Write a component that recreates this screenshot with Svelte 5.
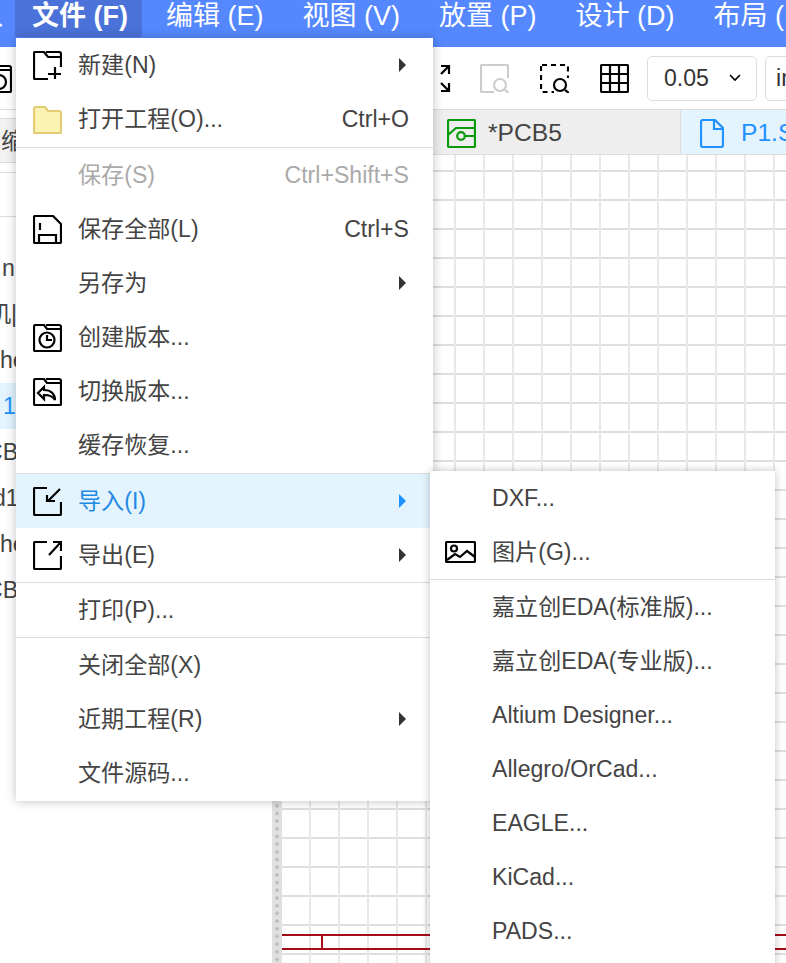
<script>
  const menus = [
    { label: '编辑 (E)' },
    { label: '视图 (V)' },
    { label: '放置 (P)' },
    { label: '设计 (D)' },
    { label: '布局 (L)' }
  ];
  const rows = [
    { t: 'n', off: 2 },
    { t: '机|', off: -12 },
    { t: 'he', off: 0 },
    { t: '1', off: 3, active: true },
    { t: 'CB', off: -14 },
    { t: 'd1', off: -7 },
    { t: 'he', off: 0 },
    { t: 'CB', off: -14 }
  ];
  const sub = ['嘉立创EDA(标准版)...', '嘉立创EDA(专业版)...', 'Altium Designer...', 'Allegro/OrCad...', 'EAGLE...', 'KiCad...', 'PADS...', 'Protel...'];
</script>

<div class="app">
  <header class="menubar">
    <span class="prev"><span>入</span></span>
    <span class="mi active">文件 (F)</span>
    {#each menus as m}<span class="mi">{m.label}</span>{/each}
  </header>

  <div class="toolbar">
    <svg class="tool clipped" viewBox="0 0 29 29"><path d="M1 4a2 2 0 0 1 1-2h9l3 4h13a1 1 0 0 1 1 1v20a1 1 0 0 1-1 1H2a1 1 0 0 1-1-1zM13 2h13a2 2 0 0 1 2 2v3" /><circle cx="16" cy="18" r="7" /></svg>
    <div class="toolspacer"></div>
    <svg class="tool fit" viewBox="0 0 29 29"><path d="M10 2h8v8M18 2l-8 8M18 19v8h-8M18 27l-8-8" /></svg>
    <svg class="tool dim" viewBox="0 0 29 29"><path d="M18 1h9a1 1 0 0 1 1 1v12M1 14V2a1 1 0 0 1 1-1h16M1 14v13a1 1 0 0 0 1 1h12" /><circle cx="20" cy="21" r="6" /><path d="M25 26l4 3" /></svg>
    <svg class="tool" viewBox="0 0 29 29"><path class="dash" d="M2 1h25a1 1 0 0 1 1 1v12M1 2v25a1 1 0 0 0 1 1h12" /><circle cx="20" cy="21" r="6" /><path d="M25 26l4 3" /></svg>
    <svg class="tool" viewBox="0 0 29 29"><rect x="1" y="1" width="27" height="27" rx="1" /><path d="M10 1v27M19 1v27M1 10h27M1 19h27" /></svg>
    <div class="select">
      <span>0.05</span>
      <svg class="chev" viewBox="0 0 12 8"><path d="M1 1l5 5 5-5" /></svg>
    </div>
    <div class="select second"><span>inch</span></div>
  </div>

  <div class="body">
    <aside class="side">
      <div class="side-gap"></div>
      <div class="side-tabs"><span class="side-tab">缩略图</span></div>
      <div class="side-line"></div>
      <div class="side-list">
        {#each rows as r}
          <div class="row" class:on={r.active}><span style="margin-left:{r.off}px">{r.t}</span></div>
        {/each}
      </div>
    </aside>
    <div class="ruler"></div>
    <main class="main">
      <div class="tabs">
        <div class="tab pcb">
          <svg class="tabicon" viewBox="0 0 29 29"><rect x="1" y="1" width="27" height="27" rx="1" /><path d="M1 16l8-7h19M18 17h10" /><circle cx="14" cy="17" r="3.8" /></svg>
          <span>*PCB5</span>
        </div>
        <div class="tab sch">
          <svg class="fileicon" viewBox="0 0 24 29"><path d="M3 1h12l8 8v17a2 2 0 0 1-2 2H3a2 2 0 0 1-2-2V3a2 2 0 0 1 2-2zM14 1v9h9" /></svg>
          <span>P1.Sch1</span>
        </div>
      </div>
      <div class="canvas">
        <div class="wire">
          <div class="tick"></div>
        </div>
      </div>
    </main>
  </div>

  <nav class="menu">
    <div class="item">
      <svg class="ico" viewBox="0 0 29 29"><path d="M15 28H2a1 1 0 0 1-1-1V2a1 1 0 0 1 1-1h9l4 5h12a1 1 0 0 1 1 1v9M13 1h13a2 2 0 0 1 2 2v3M15 23h13M22 16v12" /></svg>
      <span class="tx">新建(N)</span><i class="arrow"></i>
    </div>
    <div class="item">
      <svg class="ico" viewBox="0 0 29 29"><path class="yellow" d="M1 4a2 2 0 0 1 2-2h9l3 4h11a2 2 0 0 1 2 2v19a1 1 0 0 1-1 1H2a1 1 0 0 1-1-1z" /></svg>
      <span class="tx">打开工程(O)...</span><span class="key">Ctrl+O</span>
    </div>
    <div class="sep lead"></div>
    <div class="item off">
      <span class="tx">保存(S)</span><span class="key">Ctrl+Shift+S</span>
    </div>
    <div class="item">
      <svg class="ico" viewBox="0 0 29 29"><path d="M2 1h18l8 8v18a1 1 0 0 1-1 1H2a1 1 0 0 1-1-1V2a1 1 0 0 1 1-1zM7 8v7M6 28V20h17v8" /></svg>
      <span class="tx">保存全部(L)</span><span class="key">Ctrl+S</span>
    </div>
    <div class="item"><span class="tx">另存为</span><i class="arrow"></i></div>
    <div class="item">
      <svg class="ico" viewBox="0 0 29 29"><path d="M1 4a2 2 0 0 1 1-2h9l3 4h13a1 1 0 0 1 1 1v20a1 1 0 0 1-1 1H2a1 1 0 0 1-1-1zM13 2h13a2 2 0 0 1 2 2v3" /><circle cx="14" cy="17" r="7.5" /><path d="M14 12v5h5" /></svg>
      <span class="tx">创建版本...</span>
    </div>
    <div class="item">
      <svg class="ico" viewBox="0 0 29 29"><path d="M1 4a2 2 0 0 1 1-2h9l3 4h13a1 1 0 0 1 1 1v20a1 1 0 0 1-1 1H2a1 1 0 0 1-1-1zM13 2h13a2 2 0 0 1 2 2v3" /><path d="M11 10l-6 6 6 6v-4c5 0 9 1 11 5 0-6-4-10-11-10z" /></svg>
      <span class="tx">切换版本...</span>
    </div>
    <div class="item"><span class="tx">缓存恢复...</span></div>
    <div class="sep lead"></div>
    <div class="item hot">
      <svg class="ico" viewBox="0 0 29 29"><path d="M14 1H2a1 1 0 0 0-1 1v25a1 1 0 0 0 1 1h25a1 1 0 0 0 1-1V15M27 2L15 14M14 8v6h8" /></svg>
      <span class="tx">导入(I)</span><i class="arrow"></i>
    </div>
    <div class="item">
      <svg class="ico" viewBox="0 0 29 29"><path d="M14 1H2a1 1 0 0 0-1 1v25a1 1 0 0 0 1 1h25a1 1 0 0 0 1-1V15M16 14L28 1M20 1h8v9" /></svg>
      <span class="tx">导出(E)</span><i class="arrow"></i>
    </div>
    <div class="sep"></div>
    <div class="item"><span class="tx">打印(P)...</span></div>
    <div class="sep"></div>
    <div class="item"><span class="tx">关闭全部(X)</span></div>
    <div class="item"><span class="tx">近期工程(R)</span><i class="arrow"></i></div>
    <div class="item"><span class="tx">文件源码...</span></div>
  </nav>

  <nav class="submenu">
    <div class="subitem"><span>DXF...</span></div>
    <div class="subitem">
      <svg class="imgico" viewBox="0 0 31 22"><rect x="1" y="1" width="29" height="20" rx="1" /><circle cx="9" cy="7.5" r="3" /><path d="M2 19l8-6 5 3 7-6 8 6" /></svg>
      <span>图片(G)...</span>
    </div>
    <div class="sep"></div>
    {#each sub as s}<div class="subitem"><span>{s}</span></div>{/each}
  </nav>
</div>

<style>
  :global(body) {
    margin: 0;
    overflow: hidden;
  }
  .app {
    position: relative;
    width: 786px;
    height: 963px;
    overflow: hidden;
    display: flex;
    flex-direction: column;
    background: #fff;
    font-family: "Liberation Sans", "Noto Sans CJK SC", sans-serif;
    font-size: 23.1px;
    line-height: 30px;
    color: #444;
  }
  svg {
    fill: none;
    stroke: #000;
    stroke-width: 2.2;
    flex: none;
  }
  .menubar {
    height: 47px;
    flex: none;
    background: #5588ff;
    display: flex;
    align-items: flex-start;
    white-space: nowrap;
    color: #fff;
    font-size: 27px;
  }
  .prev {
    width: 15px;
    flex: none;
    display: flex;
    justify-content: flex-end;
    overflow: hidden;
    line-height: 33px;
  }
  .prev span {
    flex: none;
    margin-right: 12px;
  }
  .mi {
    height: 37px;
    line-height: 33px;
    padding: 0 17px;
    margin-right: 5px;
    box-sizing: border-box;
    flex: none;
  }
  .mi.active {
    padding-right: 14px;
    margin-right: 7px;
    background: #4a72d8;
    border-radius: 0 0 3px 3px;
    font-weight: 700;
  }
  .toolbar {
    height: 62px;
    flex: none;
    display: flex;
    align-items: center;
    gap: 31px;
    border-bottom: 1px solid #ddd;
    white-space: nowrap;
    overflow: hidden;
  }
  .tool {
    width: 29px;
    height: 29px;
    margin-top: 1px;
  }
  .clipped {
    margin-left: -17px;
  }
  .toolspacer {
    width: 357px;
    flex: none;
  }
  .fit {
    margin-right: -11px;
  }
  .tool.dim { stroke: #ccc; }
  .dash { stroke-dasharray: 5 4; }
  .select {
    flex: none;
    box-sizing: border-box;
    width: 110px;
    height: 45px;
    border: 1px solid #ddd;
    border-radius: 5px;
    margin-left: -13px;
    padding: 0 15px 0 16px;
    display: flex;
    align-items: center;
    justify-content: space-between;
    color: #333;
  }
  .select.second {
    margin-left: -23px;
    padding-left: 10px;
    width: 120px;
    justify-content: flex-start;
  }
  .chev {
    width: 12px;
    height: 8px;
    stroke-width: 1.6;
  }
  .body {
    flex: 1;
    min-height: 0;
    display: flex;
  }
  .side {
    width: 272px;
    flex: none;
    overflow: hidden;
    display: flex;
    flex-direction: column;
  }
  .side-gap { height: 8px; flex: none; }
  .side-tabs {
    height: 45px;
    flex: none;
    box-sizing: border-box;
    background: #f2f2f2;
    border-top: 1px solid #ddd;
    border-bottom: 1px solid #ddd;
    display: flex;
    align-items: center;
  }
  .side-tab { margin-left: 1px; }
  .side-line {
    height: 45px;
    flex: none;
    margin-top: 9px;
    box-sizing: border-box;
    border-top: 1px solid #ddd;
    border-bottom: 1px solid #ddd;
  }
  .side-list { margin-top: 28px; }
  .row {
    height: 46px;
    display: flex;
    align-items: center;
    white-space: nowrap;
    color: #444;
  }
  .row.on {
    background: #e3f4fe;
    color: #1e90ff;
  }
  .ruler {
    width: 10px;
    flex: none;
    background-color: #e0e0e0;
    background-image: radial-gradient(circle, #bbb 1.4px, transparent 2px);
    background-size: 10px 7.7px;
  }
  .main {
    flex: 1;
    min-width: 0;
    display: flex;
    flex-direction: column;
  }
  .tabs {
    height: 45px;
    flex: none;
    display: flex;
    box-sizing: border-box;
    border-bottom: 1px solid #ddd;
    white-space: nowrap;
  }
  .tab {
    display: flex;
    align-items: center;
    flex: none;
    padding-top: 2px;
  }
  .pcb {
    width: 399px;
    box-sizing: border-box;
    padding-left: 165px;
    gap: 12px;
    background: #eeeeee;
    border-right: 1px solid #ddd;
    color: #444;
    font-size: 24.6px;
  }
  .tabicon {
    width: 29px;
    height: 29px;
    stroke: #089a08;
  }
  .sch {
    flex: 1;
    padding-left: 19px;
    gap: 17px;
    background: #e3f4fe;
    color: #1e90ff;
    font-size: 24.6px;
  }
  .fileicon {
    width: 24px;
    height: 29px;
    stroke: #1e90ff;
  }
  .canvas {
    flex: 1;
    position: relative;
    background-color: #fff;
    background-image:
      linear-gradient(to right, #e8e8e8 2px, transparent 2px),
      linear-gradient(to bottom, #dedede 1.5px, transparent 1.5px);
    background-size: 29px 29px;
    background-position: 27px 15px;
  }
  .wire {
    position: absolute;
    left: 0;
    right: 0;
    top: 779px;
    height: 16px;
    box-sizing: border-box;
    border-top: 2px solid #a30d17;
    border-bottom: 2px solid #a30d17;
  }
  .tick {
    position: absolute;
    left: 39px;
    top: 0;
    width: 2px;
    height: 100%;
    background: #a30d17;
  }
  .menu {
    position: absolute;
    left: 16px;
    top: 38px;
    width: 417px;
    background: #fff;
    box-shadow: 0 0 10px rgba(0, 0, 0, 0.25);
    display: flex;
    flex-direction: column;
    padding-bottom: 1px;
    white-space: nowrap;
  }
  .item {
    height: 54px;
    flex: none;
    position: relative;
    display: flex;
    align-items: center;
    padding: 0 24px 0 62px;
  }
  .ico {
    position: absolute;
    left: 17px;
    top: 13px;
    width: 29px;
    height: 29px;
  }
  .yellow {
    fill: #fbf3b4;
    stroke: #e3cc72;
  }
  .tx { flex: 1; }
  .key { flex: none; }
  .off { color: #aaa; }
  .hot {
    background: #e3f4fe;
    color: #1e88e5;
  }
  .arrow {
    width: 0;
    height: 0;
    margin-right: 3px;
    border-left: 7px solid #333;
    border-top: 7px solid transparent;
    border-bottom: 7px solid transparent;
  }
  .hot .arrow { border-left-color: #1e90ff; }
  .sep {
    height: 1px;
    flex: none;
    background: #ddd;
  }
  .sep.lead { margin-top: 1px; }
  .submenu {
    position: absolute;
    left: 430px;
    top: 471px;
    width: 345px;
    background: #fff;
    box-shadow: 0 0 8px rgba(0, 0, 0, 0.25);
    display: flex;
    flex-direction: column;
    white-space: nowrap;
  }
  .subitem {
    height: 54px;
    flex: none;
    position: relative;
    display: flex;
    align-items: center;
    padding-left: 62px;
  }
  .imgico {
    position: absolute;
    left: 15px;
    top: 16px;
    width: 31px;
    height: 22px;
  }
</style>
